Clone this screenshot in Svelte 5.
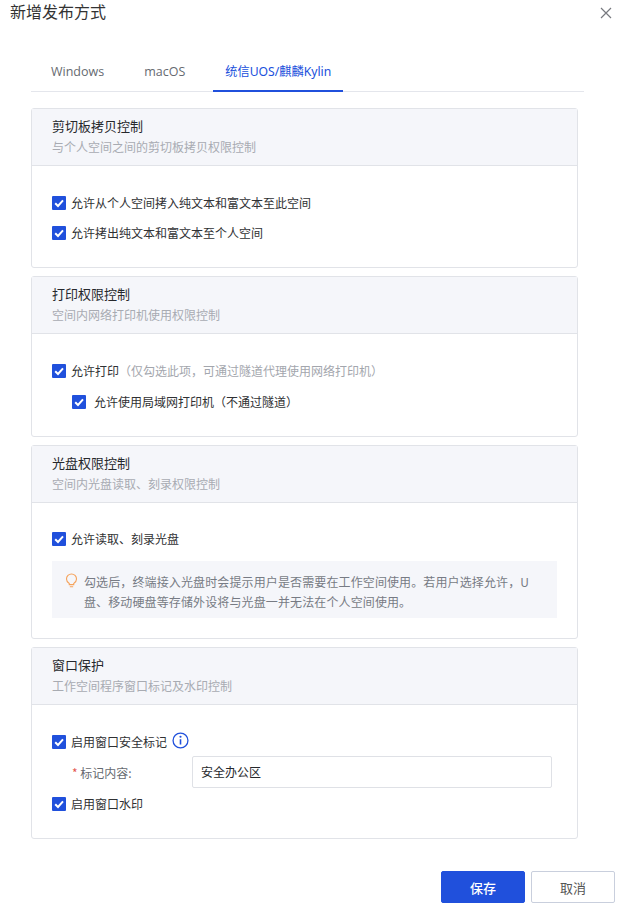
<script>
  const check = 'M3.2 7.2 6 10l5-5.6';
</script>

{#snippet box()}
  <svg class="box" viewBox="0 0 14 14" aria-hidden="true"><rect width="14" height="14" rx="1" fill="#2050dc"/><path d={check} fill="none" stroke="#fff" stroke-width="2"/></svg>
{/snippet}

<div class="dialog">
  <header class="head">
    <h1>新增发布方式</h1>
    <svg class="close" viewBox="0 0 12 12" aria-hidden="true"><path d="M1 1l10 10M11 1 1 11" stroke="#77797f" stroke-width="1.2" fill="none"/></svg>
  </header>

  <nav class="tabs">
    <span class="tab">Windows</span>
    <span class="tab">macOS</span>
    <span class="tab active">统信UOS/麒麟Kylin</span>
  </nav>

  <section class="card c1">
    <div class="chead"><h2>剪切板拷贝控制</h2><p>与个人空间之间的剪切板拷贝权限控制</p></div>
    <div class="cbody">
      <label class="row">{@render box()}允许从个人空间拷入纯文本和富文本至此空间</label>
      <label class="row gap">{@render box()}允许拷出纯文本和富文本至个人空间</label>
    </div>
  </section>

  <section class="card c2">
    <div class="chead"><h2>打印权限控制</h2><p>空间内网络打印机使用权限控制</p></div>
    <div class="cbody">
      <label class="row">{@render box()}允许打印<span class="hint">（仅勾选此项，可通过隧道代理使用网络打印机）</span></label>
      <label class="row sub">{@render box()}允许使用局域网打印机（不通过隧道）</label>
    </div>
  </section>

  <section class="card c3">
    <div class="chead"><h2>光盘权限控制</h2><p>空间内光盘读取、刻录权限控制</p></div>
    <div class="cbody">
      <label class="row">{@render box()}允许读取、刻录光盘</label>
      <div class="note">
        <svg class="bulb" viewBox="0 0 14 16" aria-hidden="true"><path d="M4.6 11.2C3 10.2 1.6 8.600 1.600 6.400a5.400 5.400 0 0 1 10.800 0c0 2.200-1.400 3.800-3 4.800v1.300H4.600zM5.200 14.700h3.600" fill="none" stroke="#f5a35c" stroke-width="1.200"/></svg>
        <p>勾选后，终端接入光盘时会提示用户是否需要在工作空间使用。若用户选择允许，U盘、移动硬盘等存储外设将与光盘一并无法在个人空间使用。</p>
      </div>
    </div>
  </section>

  <section class="card c4">
    <div class="chead"><h2>窗口保护</h2><p>工作空间程序窗口标记及水印控制</p></div>
    <div class="cbody">
      <label class="row">{@render box()}启用窗口安全标记
        <svg class="info" viewBox="0 0 16 16" aria-hidden="true"><circle cx="8" cy="8" r="7" fill="none" stroke="#2050dc" stroke-width="1.200"/><path d="M8 6.800v5" stroke="#2050dc" stroke-width="1.500"/><circle cx="8" cy="4.500" r="1" fill="#2050dc"/></svg>
      </label>
      <div class="field">
        <span class="flabel"><i>*</i> 标记内容:</span>
        <div class="input">安全办公区</div>
      </div>
      <label class="row">{@render box()}启用窗口水印</label>
    </div>
  </section>

  <footer class="foot">
    <button class="primary">保存</button>
    <button class="plain">取消</button>
  </footer>
</div>

<style>
  :global(body) { margin: 0; background: #fff; }
  .dialog {
    width: 618px;
    height: 912px;
    overflow: hidden;
    font-family: "Noto Sans CJK SC", "Noto Sans", sans-serif;
    font-size: 12px;
    color: #303133;
  }
  .head {
    display: flex;
    justify-content: space-between;
    align-items: flex-start;
    height: 26px;
    padding: 0 6px 0 10px;
  }
  h1 { margin: 0; font-size: 16px; line-height: 23px; font-weight: 400; color: #333; }
  .close { width: 12px; height: 12px; margin-top: 7px; }
  .tabs {
    display: flex;
    gap: 16px;
    margin: 32px 34px 0 31px;
    padding-left: 8px;
    border-bottom: 1px solid #e4e6ec;
    height: 33px;
  }
  .tab {
    padding: 5px 12px 0;
    font-size: 12.500px;
    line-height: 18px;
    color: #666a70;
    font-family: "Open Sans", "Noto Sans CJK SC", sans-serif;
  }
  .active {
    font-size: 12.200px;
    color: #2050dc;
    border-bottom: 2px solid #2050dc;
    margin-bottom: -1px;
    font-family: "Noto Sans", "Noto Sans CJK SC", sans-serif;
  }
  .card {
    width: 547px;
    box-sizing: border-box;
    margin: 8px 0 0 31px;
    border: 1px solid #e1e3e8;
    border-radius: 3px;
  }
  .c1 { margin-top: 16px; height: 160px; }
  .c2 { height: 161px; }
  .c3 { height: 194px; }
  .c4 { height: 192px; }
  .chead {
    box-sizing: border-box;
    height: 57px;
    padding: 7px 20px 0;
    background: #f5f6fa;
    border-bottom: 1px solid #e1e3e8;
  }
  h2 { margin: 0; font-size: 13px; line-height: 20px; font-weight: 400; color: #26282c; }
  .chead p { margin: 2px 0 0; font-size: 12px; line-height: 18px; color: #a8abb2; }
  .cbody { padding: 28px 20px 0; }
  .c3 .cbody { padding-top: 27px; }
  .c4 .cbody { padding-top: 28px; }
  .row { display: flex; align-items: center; height: 18px; line-height: 18px; color: #303133; }
  .gap { margin-top: 12px; }
  .sub { margin: 13px 0 0 20px; }
  .sub .box { margin-right: 8px; }
  .box { width: 14px; height: 14px; margin-right: 5px; flex: none; }
  .hint { color: #a3a6ad; }
  .info { width: 17px; height: 17px; margin: -3px 0 0 5px; }
  .note {
    display: flex;
    gap: 6px;
    width: 505px;
    height: 57px;
    box-sizing: border-box;
    margin-top: 13px;
    padding: 11px 16px 0 13px;
    background: #f5f6fa;
  }
  .bulb { width: 13px; height: 15px; flex: none; margin-top: 1px; }
  .note p { margin: 0; line-height: 20px; color: #777b84; font-size: 12px; letter-spacing: 0.12px; }
  .field { display: flex; align-items: center; margin: 5px 0 7px; }
  .flabel { width: 140px; padding-left: 20px; box-sizing: border-box; color: #666a70; }
  .flabel i { color: #e5574f; font-style: normal; }
  .input {
    box-sizing: border-box;
    width: 360px;
    height: 32px;
    padding-left: 8px;
    line-height: 30px;
    border: 1px solid #dfe1e6;
    border-radius: 2px;
    color: #26282c;
  }
  .foot {
    display: flex;
    justify-content: flex-end;
    gap: 6px;
    padding: 32px 3px 0 0;
  }
  button {
    box-sizing: border-box;
    width: 84px;
    height: 32px;
    border-radius: 2px;
    font: inherit;
    font-size: 13px;
    padding: 0;
  }
  .primary { background: #2050dc; border: 1px solid #2050dc; color: #fff; font-weight: 500; }
  .plain { background: #fff; border: 1px solid #c9cfdd; color: #555; }
</style>
